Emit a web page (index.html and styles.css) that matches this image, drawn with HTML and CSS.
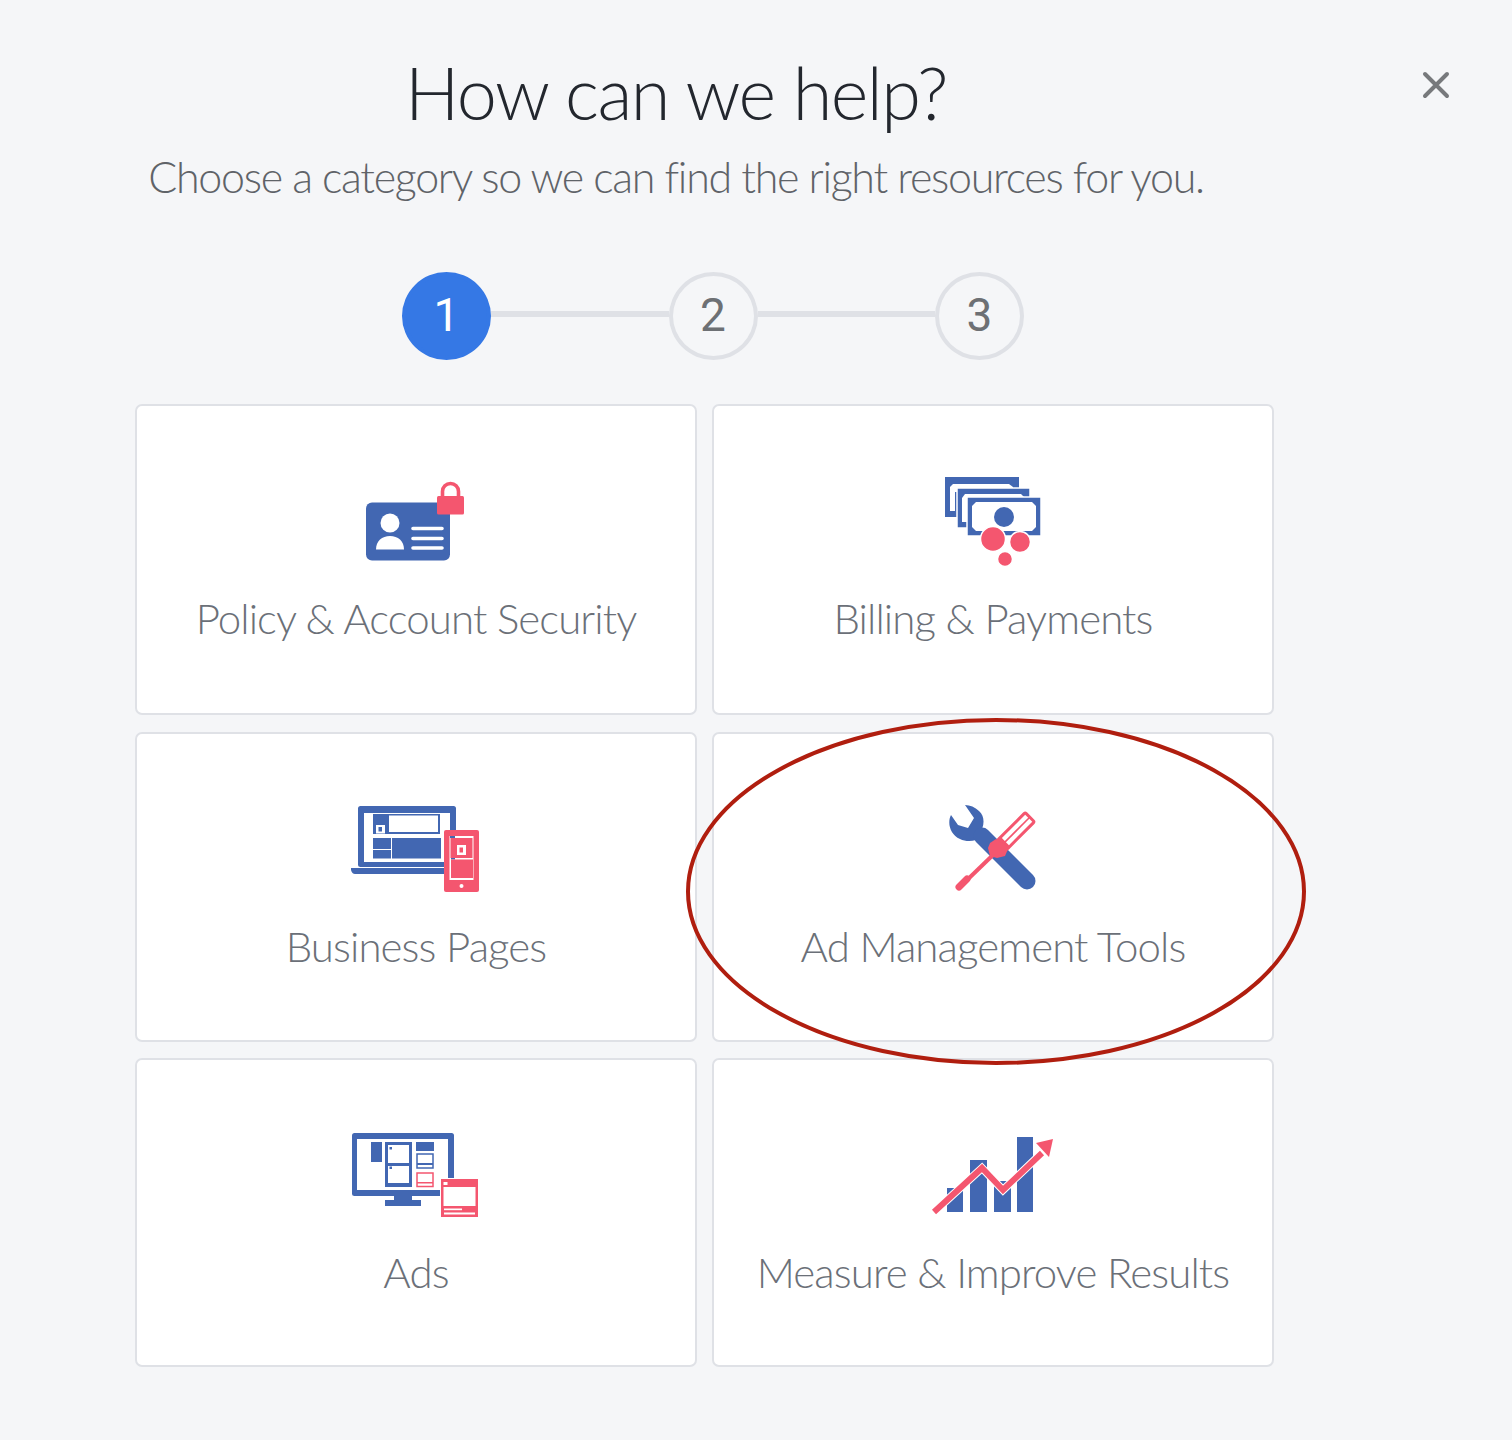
FILE: index.html
```html
<!DOCTYPE html>
<html lang="en">
<head>
    <meta charset="UTF-8">
    <meta name="viewport" content="width=device-width, initial-scale=1.0">
    <title>How can we help?</title>
    <link rel="stylesheet" href="styles.css">
</head>
<body>
    <button class="close-btn" aria-label="Close">
        <svg width="30" height="30" viewBox="0 0 30 30"><path d="M4 4L26 26M26 4L4 26" stroke="#77797c" stroke-width="4" stroke-linecap="round"/></svg>
    </button>

    <div class="header">
        <h1>How can we help?</h1>
        <p>Choose a category so we can find the right resources for you.</p>
    </div>

    <div class="stepper">
        <div class="step active">1</div>
        <div class="step-line"></div>
        <div class="step">2</div>
        <div class="step-line"></div>
        <div class="step">3</div>
    </div>

    <div class="category-grid">
        <div class="card">
            <svg class="card-icon" viewBox="-4 0 160 120">
                <rect x="26" y="42.500" width="84" height="58" rx="6" fill="#4267b2"/>
                <circle cx="50" cy="63" r="9.5" fill="#fff"/>
                <path d="M36 89.5C36 81 42 76 50 76S64 81 64 89.5Z" fill="#fff"/>
                <path d="M73 68.5H102M73 78.5H102M73 88H102" stroke="#fff" stroke-width="3.6" stroke-linecap="round"/>
                <path d="M102.500 37V31.500a8 8 0 0 1 16 0V37" fill="none" stroke="#f4566f" stroke-width="3.600"/>
                <rect x="97" y="36" width="27" height="18.500" rx="1.500" fill="#f4566f"/>
            </svg>
            <div class="card-label">Policy &amp; Account Security</div>
        </div>

        <div class="card">
            <svg class="card-icon" viewBox="-7 0 160 120">
                <g fill="#4267b2">
                    <rect x="25" y="17" width="74" height="40"/>
                    <path d="M30 27L33 24H89L93 27V32H30Z" fill="#fff"/>
                    <rect x="30" y="27" width="5" height="24" fill="#fff"/>
                    <rect x="37" y="28" width="73" height="40" stroke="#fff" stroke-width="1.500"/>
                    <path d="M42 38L45 34H101L105 38V43H42Z" fill="#fff"/>
                    <rect x="42" y="38" width="5" height="24" fill="#fff"/>
                    <rect x="47" y="37" width="74" height="39" stroke="#fff" stroke-width="1.500"/>
                    <path d="M56 42H112L116 46V67L112 71H56L52 67V46Z" fill="#fff"/>
                    <circle cx="84" cy="57" r="10"/>
                </g>
                <g fill="#f4566f" stroke="#fff" stroke-width="1.500">
                    <circle cx="73" cy="79" r="12.500"/>
                    <circle cx="100" cy="82" r="10.500"/>
                    <circle cx="85" cy="99" r="7.500"/>
                </g>
            </svg>
            <div class="card-label">Billing &amp; Payments</div>
        </div>

        <div class="card">
            <svg class="card-icon" viewBox="-4 -2 160 120">
                <rect x="18" y="16" width="98" height="61" rx="2.500" fill="#4267b2"/>
                <rect x="24" y="23" width="86" height="49" fill="#fff"/>
                <path d="M11 78H107V84H15Q12 84 11 80Z" fill="#4267b2"/>
                <g fill="#4267b2">
                    <rect x="33" y="24" width="67" height="20"/>
                    <rect x="33" y="48" width="18" height="11"/>
                    <rect x="33" y="60" width="18" height="8.500"/>
                    <rect x="52" y="48" width="49" height="20.500"/>
                </g>
                <rect x="49" y="25.500" width="49" height="16.500" fill="#fff"/>
                <rect x="36" y="35" width="9" height="8.500" fill="#fff"/>
                <rect x="38.500" y="37" width="3.500" height="4.500" fill="#4267b2"/>
                <rect x="104" y="40" width="35" height="62" rx="2" fill="#f4566f"/>
                <rect x="109.500" y="46" width="24" height="44" fill="#fff"/>
                <rect x="110" y="46" width="5" height="2" fill="#4267b2"/>
                <rect x="110.500" y="48" width="22" height="20" fill="#f4566f"/>
                <rect x="111" y="68" width="4" height="1.500" fill="#4267b2"/>
                <rect x="111" y="69.500" width="22" height="18.500" fill="#f4566f"/>
                <rect x="117" y="55" width="9" height="10" fill="#fff"/>
                <rect x="119.500" y="57.500" width="3.500" height="5" fill="#f4566f"/>
                <circle cx="121.500" cy="96" r="2" fill="#fff"/>
            </svg>
            <div class="card-label">Business Pages</div>
        </div>

        <div class="card">
            <svg class="card-icon" viewBox="-17 -2 160 120">
                <path d="M35 15L44 28L38 38L28 35L21 25C17 33 20 44 30 49C35 51.500 41 51.500 46 50L49 44C54 38 56 27 49 21C45 17 40 15 35 15Z" fill="#4267b2"/>
                <path d="M52 46L97 91" stroke="#4267b2" stroke-width="17" stroke-linecap="round"/>
                <rect x="-21" y="-8" width="42" height="16" rx="3" fill="#f4566f" transform="translate(86 41) rotate(-45)"/>
                <rect x="-15" y="-5" width="33" height="4.200" fill="#fff" transform="translate(86 41) rotate(-45)"/>
                <rect x="-15" y="0.800" width="33" height="4.200" fill="#fff" transform="translate(86 41) rotate(-45)"/>
                <path d="M66 49L79 57L75 66L67 68L60 66L58 58L60 53Z" fill="#f4566f"/>
                <path d="M64 64L35 92" stroke="#f4566f" stroke-width="4"/>
                <path d="M37 89L29 97" stroke="#f4566f" stroke-width="7" stroke-linecap="round"/>
            </svg>
            <div class="card-label">Ad Management Tools</div>
        </div>

        <div class="card">
            <svg class="card-icon" viewBox="-4 -6 160 120">
                <rect x="12" y="13" width="102" height="63" rx="2.500" fill="#4267b2"/>
                <rect x="17" y="19" width="91" height="51" fill="#fff"/>
                <path d="M54 76H72V80H81V86H45V80H54Z" fill="#4267b2"/>
                <rect x="31" y="22" width="11" height="20" fill="#4267b2"/>
                <rect x="45" y="22" width="27" height="45" fill="#4267b2"/>
                <rect x="48" y="25" width="21" height="18" fill="#fff"/>
                <rect x="48" y="46" width="21" height="17" fill="#fff"/>
                <rect x="49.500" y="27" width="2.500" height="2.500" fill="#4267b2"/>
                <rect x="49.500" y="46.500" width="2.500" height="2.500" fill="#4267b2"/>
                <rect x="76" y="22" width="18" height="9" fill="#4267b2"/>
                <rect x="77" y="34" width="16" height="14" fill="#fff" stroke="#4267b2" stroke-width="1.500"/>
                <rect x="77" y="43" width="16" height="2" fill="#4267b2"/>
                <rect x="77" y="53" width="16" height="13.500" fill="#fff" stroke="#f4566f" stroke-width="1.500"/>
                <rect x="77" y="62" width="16" height="1.500" fill="#f4566f"/>
                <rect x="100" y="58" width="39" height="40" fill="#fff"/>
                <rect x="101" y="59" width="37" height="38" fill="#f4566f"/>
                <rect x="103.500" y="67" width="32" height="19" fill="#fff"/>
                <rect x="103.500" y="62" width="4" height="3" fill="#fff"/>
                <rect x="104" y="88.500" width="18" height="1.700" fill="#fff"/>
                <rect x="104" y="92.500" width="31" height="2" fill="#fff"/>
            </svg>
            <div class="card-label">Ads</div>
        </div>

        <div class="card">
            <svg class="card-icon" viewBox="-12 -11 160 120">
                <g fill="#4267b2">
                    <rect x="22" y="63" width="16" height="24"/>
                    <rect x="45" y="35" width="17" height="52"/>
                    <rect x="69" y="56" width="17" height="31"/>
                    <rect x="92" y="12" width="16" height="75"/>
                </g>
                <path d="M9 87L57 43L78 65L117 28" fill="none" stroke="#fff" stroke-width="8"/>
                <path d="M9 87L57 43L78 65L117 28" fill="none" stroke="#f4566f" stroke-width="6"/>
                <path d="M128 14L111 18L124 32Z" fill="#f4566f"/>
            </svg>
            <div class="card-label">Measure &amp; Improve Results</div>
        </div>

        <svg class="highlight-ring" width="624" height="350" viewBox="0 0 624 350">
            <ellipse cx="311" cy="173.500" rx="308" ry="171.500" fill="none" stroke="#b01e0f" stroke-width="4"/>
        </svg>
    </div>
</body>
</html>
```

FILE: styles.css
```css
body {
    font-family: Lato, "Open Sans", sans-serif;
    font-weight: 300;
    background-color: #f5f6f8;
    color: #5f6368;
    margin: 0;
    padding: 0;
    height: 1440px;
    overflow: hidden;
}
.close-btn {
    position: absolute;
    top: 70px;
    left: 1421px;
    width: 30px;
    height: 30px;
    padding: 0;
    background: none;
    border: none;
}
.header {
    width: 1082px;
    margin-left: 135px;
    padding-top: 47px;
    text-align: center;
}
.header h1 {
    margin: 0;
    font-size: 72px;
    font-weight: 300;
    letter-spacing: -1.5px;
    line-height: 90px;
    color: #23272e;
}
.header p {
    margin: 10px 0 0;
    font-size: 43px;
    font-weight: 300;
    letter-spacing: -1.3px;
    line-height: 60px;
    white-space: nowrap;
}
.stepper {
    display: flex;
    align-items: center;
    margin: 65px 0 44px 402px;
}
.step {
    box-sizing: border-box;
    width: 89px;
    height: 88px;
    border: 4px solid #dfe1e6;
    border-radius: 50%;
    font-family: Roboto, "Liberation Sans", sans-serif;
    font-weight: 400;
    font-size: 46px;
    line-height: 78px;
    text-align: center;
    color: #6d7074;
}
.step.active {
    background: #3578e5;
    border-color: #3578e5;
    color: white;
}
.step-line {
    width: 177.5px;
    height: 6px;
    margin-bottom: 5px;
    background: #dfe1e6;
}
.category-grid {
    position: relative;
    display: grid;
    grid-template-columns: 562px 562px;
    grid-template-rows: 311px 310px 309px;
    column-gap: 15px;
    row-gap: 16.5px;
    margin-left: 135px;
}
.card {
    box-sizing: border-box;
    display: flex;
    flex-direction: column;
    align-items: center;
    padding-top: 54px;
    background: white;
    border: 2px solid #dfe1e6;
    border-radius: 7px;
}
.card-icon {
    width: 160px;
    height: 120px;
    flex-shrink: 0;
    filter: blur(0.4px);
}
.card-label {
    margin-top: -2px;
    font-size: 42px;
    letter-spacing: -0.9px;
    line-height: 80px;
    color: #6b7078;
    white-space: nowrap;
}
.highlight-ring {
    position: absolute;
    left: 550px;
    top: 314px;
}
```
